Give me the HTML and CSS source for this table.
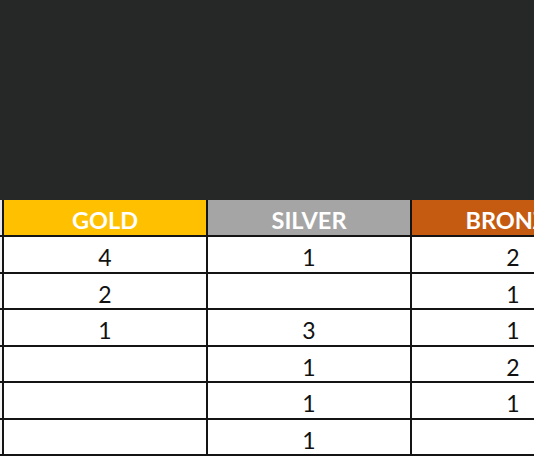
FILE: index.html
```html
<!DOCTYPE html>
<html>
<head>
<meta charset="utf-8">
<link rel="stylesheet" href="styles.css">
</head>
<body>
<div class="top"></div>
<div class="sheet">
  <div class="cell edge head-edge"></div>
  <div class="cell head gold">GOLD</div>
  <div class="cell head silver">SILVER</div>
  <div class="cell head bronze">BRONZE</div>

  <div class="cell edge"></div><div class="cell">4</div><div class="cell">1</div><div class="cell">2</div>
  <div class="cell edge"></div><div class="cell">2</div><div class="cell"></div><div class="cell">1</div>
  <div class="cell edge"></div><div class="cell">1</div><div class="cell">3</div><div class="cell">1</div>
  <div class="cell edge"></div><div class="cell"></div><div class="cell">1</div><div class="cell">2</div>
  <div class="cell edge"></div><div class="cell"></div><div class="cell">1</div><div class="cell">1</div>
  <div class="cell edge"></div><div class="cell"></div><div class="cell">1</div><div class="cell"></div>
</div>
</body>
</html>
```
FILE: styles.css
```css
html, body {
  margin: 0;
  padding: 0;
  background: #ffffff;
  overflow: hidden;
  width: 534px;
  height: 462px;
}
.top {
  height: 200px;
  background: #262827;
}
.sheet {
  display: grid;
  grid-template-columns: 4px 204px 204px 204px;
  grid-template-rows: 37px repeat(6, 36.5px);
  width: 616px;
  font-family: Lato, "Open Sans", sans-serif;
}
.cell {
  box-sizing: border-box;
  border-right: 2px solid #141414;
  border-bottom: 2px solid #141414;
  display: flex;
  align-items: center;
  justify-content: center;
  font-size: 23px;
  color: #111;
  padding-top: 6px;
  background: #fff;
}
.edge {
  background: #f4f4f4;
}
.head {
  color: #fff;
  font-weight: 700;
  font-size: 23.5px;
  padding-top: 4px;
}
.head-edge {
  background: #e8e8e8;
}
.gold { background: #ffc000; }
.silver { background: #a5a5a5; }
.bronze { background: #c55a11; }
```
